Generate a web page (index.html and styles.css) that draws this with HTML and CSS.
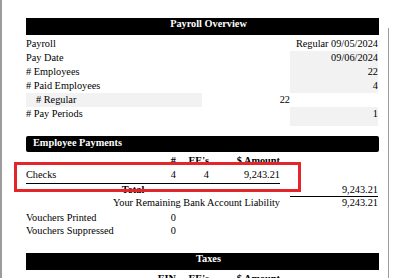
FILE: index.html
```html
<!DOCTYPE html>
<html lang="en">
<head>
    <meta charset="UTF-8">
    <meta name="viewport" content="width=device-width, initial-scale=1.0">
    <title>Payroll Register</title>
    <link rel="stylesheet" href="styles.css">
</head>
<body>
    <div class="page">
        <div class="report">
            <div class="bar bar-center">Payroll Overview</div>
            <div class="overview">
                <div>Payroll</div><div></div><div class="num">Regular 09/05/2024</div>
                <div>Pay Date</div><div></div><div class="num shade">09/06/2024</div>
                <div># Employees</div><div></div><div class="num shade">22</div>
                <div># Paid Employees</div><div></div><div class="num shade">4</div>
                <div class="sub shade"># Regular</div><div class="num">22</div><div></div>
                <div class="last"># Pay Periods</div><div class="last"></div><div class="num shade last">1</div>
            </div>

            <div class="bar bar-round">Employee Payments</div>
            <div class="payments">
                <div></div><div class="num head">#</div><div class="num head">EE's</div><div class="num head">$ Amount</div><div></div><div></div>
                <div class="line">Checks</div><div class="num line">4</div><div class="num line">4</div><div class="num line">9,243.21</div><div></div><div></div>
                <div class="total-label">Total</div><div></div><div class="num total-value">9,243.21</div>
                <div class="num liability liability-label">Your Remaining Bank Account Liability</div><div class="liability"></div><div class="num liability">9,243.21</div>
                <div class="voucher">Vouchers Printed</div><div class="num voucher">0</div><div class="voucher wide"></div>
                <div class="voucher">Vouchers Suppressed</div><div class="num voucher">0</div><div class="voucher wide"></div>
            </div>

            <div class="bar bar-center bar-taxes">Taxes</div>
            <div class="payments">
                <div></div><div class="num head">EIN</div><div class="num head">EE's</div><div class="num head">$ Amount</div><div></div><div></div>
            </div>
        </div>
        <div class="edge"></div>

        <!-- highlight around the checks line -->
        <div class="mark"></div>
    </div>
</body>
</html>
```

FILE: styles.css
```css
body {
    margin: 0;
    font-family: "Liberation Serif", "Times New Roman", serif;
    font-size: 10.3px;
    color: #000;
    background-color: white;
    overflow: hidden;
}
.page {
    position: relative;
    display: flex;
    min-height: 278px;
    border-left: 2px solid #9c9c9c;
}
.report {
    width: 353px;
    margin-left: 24px;
    padding-top: 18px;
}
.edge {
    margin-left: 9px;
    margin-top: 28px;
    border-left: 1px solid #9c9c9c;
}
.bar {
    background-color: #000;
    color: white;
    font-weight: bold;
    line-height: 12px;
    padding-bottom: 5px;
}
.bar-center {
    text-align: center;
    padding-left: 12px;
}
.bar-round {
    margin-top: 10px;
    line-height: 13px;
    padding: 0 0 3px 7px;
    border-radius: 2px;
}
.bar-taxes {
    margin-top: 16px;
}
.num {
    text-align: right;
}
.shade {
    background-color: #f2f2f2;
}

/* overview block */
.overview {
    display: grid;
    grid-template-columns: 176px 88px 88px;
    margin-top: 2px;
    line-height: 14px;
}
.overview .sub {
    padding-left: 10px;
}
.overview .last {
    height: 19px;
}

/* payments block */
.payments {
    display: grid;
    grid-template-columns: 130px 20px 33px 71px 10px 88px;
    margin-top: 2px;
    line-height: 14px;
}
.payments .head {
    font-weight: bold;
}
.payments .line {
    padding-bottom: 1px;
    border-bottom: 1px solid #000;
}
.total-label {
    grid-column: 1 / 5;
    font-weight: bold;
    text-align: center;
    padding-right: 40px;
    line-height: 12px;
}
.total-value {
    grid-column: 6;
    line-height: 12px;
    border-bottom: 1px solid #000;
}
.payments .liability {
    line-height: 12px;
    padding-bottom: 2px;
}
.payments .liability-label {
    grid-column: 1 / 5;
}
.payments .voucher {
    line-height: 13px;
}
.payments .wide {
    grid-column: 3 / 7;
}
.mark {
    position: absolute;
    left: 12px;
    top: 162px;
    width: 287px;
    height: 30px;
    box-sizing: border-box;
    border: 3px solid #e4262b;
}
```
